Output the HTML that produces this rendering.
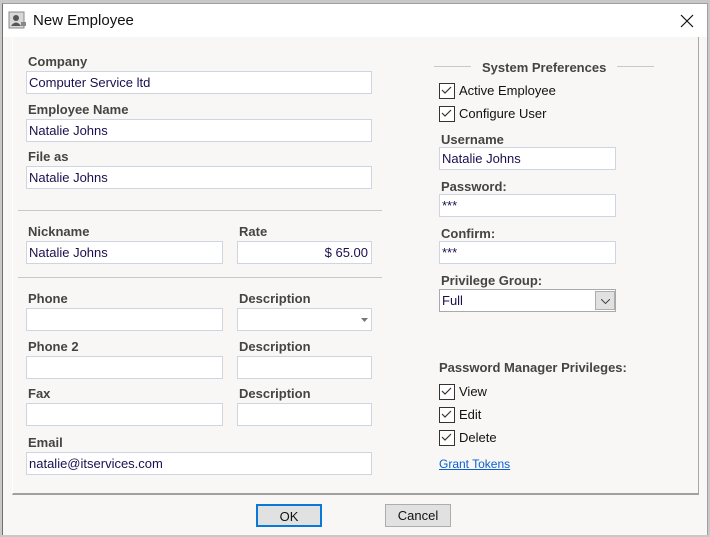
<!DOCTYPE html>
<html><head><meta charset="utf-8"><style>
*{box-sizing:border-box;margin:0;padding:0}
body{width:710px;height:537px;background:#c8c8c8;font-family:"Liberation Sans",Arial,sans-serif;position:relative;overflow:hidden}
.win{position:absolute;left:2px;top:3px;width:706px;height:532px;background:#f8f7f6;border-left:1px solid #707070;border-top:1px solid #a0a0a0;border-right:1px solid #a0a0a0}
.title{position:absolute;left:0;top:0;width:100%;height:33px;background:#fff}
.a{position:absolute}
.lbl{position:absolute;font-size:13px;font-weight:bold;color:#444}
.in{position:absolute;height:23px;background:#fff;border:1px solid #ccd5e0;font-size:13px;color:#1b0f4f;padding:3px 0 0 2px;white-space:nowrap}
.hr{position:absolute;height:1px;background:#c8c8c8}
.cb{position:absolute;font-size:13px;color:#111;padding-left:20px;height:16px;line-height:16px}
.cb:before{content:"";position:absolute;left:0;top:0;width:14px;height:14px;border:1px solid #333;background:#fff}
.cb svg{position:absolute;left:2px;top:3px}
.btn{position:absolute;height:23px;font-size:13px;text-align:center;line-height:21px;color:#111}
</style></head><body>
<div class="win">
<div class="title">
<svg class="a" style="left:5px;top:7px" width="20" height="20" viewBox="0 0 20 20"><rect x="1" y="1" width="15" height="16" fill="#d8d8d8" stroke="#888"/><circle cx="8" cy="7" r="3" fill="#555"/><path d="M3 15q5-7 10 0z" fill="#555"/><rect x="13" y="11" width="5" height="4" fill="#888"/></svg>
<div class="a" style="left:30px;top:8px;font-size:15px;color:#111">New Employee</div>
<svg class="a" style="left:677px;top:10px" width="14" height="14" viewBox="0 0 14 14"><path d="M1 1L13 13M13 1L1 13" stroke="#111" stroke-width="1.2"/></svg>
</div>
</div>
<div class="a" style="left:12px;top:37px;width:687px;height:458px;border-left:1px solid #fff;border-right:1px solid #a8a8a8;border-bottom:2px solid #a0a0a0"></div>

<div class="lbl" style="left:28px;top:54px">Company</div>
<div class="in" style="left:26px;top:71px;width:346px">Computer Service ltd</div>
<div class="lbl" style="left:28px;top:102px">Employee Name</div>
<div class="in" style="left:26px;top:119px;width:346px">Natalie Johns</div>
<div class="lbl" style="left:28px;top:149px">File as</div>
<div class="in" style="left:26px;top:166px;width:346px">Natalie Johns</div>
<div class="hr" style="left:18px;top:210px;width:364px"></div>
<div class="lbl" style="left:28px;top:224px">Nickname</div>
<div class="in" style="left:26px;top:241px;width:197px">Natalie Johns</div>
<div class="lbl" style="left:239px;top:224px">Rate</div>
<div class="in" style="left:237px;top:241px;width:135px;text-align:right;padding-right:3px">$ 65.00</div>
<div class="hr" style="left:18px;top:277px;width:364px"></div>
<div class="lbl" style="left:28px;top:291px">Phone</div>
<div class="in" style="left:26px;top:308px;width:197px"></div>
<div class="lbl" style="left:239px;top:291px">Description</div>
<div class="in" style="left:237px;top:308px;width:135px"><svg class="a" style="left:123px;top:9px" width="7" height="4"><path d="M0 0h7L3.5 4z" fill="#777"/></svg></div>
<div class="lbl" style="left:28px;top:339px">Phone 2</div>
<div class="in" style="left:26px;top:356px;width:197px"></div>
<div class="lbl" style="left:239px;top:339px">Description</div>
<div class="in" style="left:237px;top:356px;width:135px"></div>
<div class="lbl" style="left:28px;top:386px">Fax</div>
<div class="in" style="left:26px;top:403px;width:197px"></div>
<div class="lbl" style="left:239px;top:386px">Description</div>
<div class="in" style="left:237px;top:403px;width:135px"></div>
<div class="lbl" style="left:28px;top:435px">Email</div>
<div class="in" style="left:26px;top:452px;width:346px">natalie@itservices.com</div>

<div class="hr" style="left:434px;top:66px;width:37px"></div>
<div class="lbl" style="left:482px;top:60px">System Preferences</div>
<div class="hr" style="left:617px;top:66px;width:37px"></div>
<div class="cb" style="left:439px;top:83px">Active Employee<svg width="11" height="9"><path d="M1 4l3 3 6-6" stroke="#333" fill="none" stroke-width="1.2"/></svg></div>
<div class="cb" style="left:439px;top:106px">Configure User<svg width="11" height="9"><path d="M1 4l3 3 6-6" stroke="#333" fill="none" stroke-width="1.2"/></svg></div>
<div class="lbl" style="left:441px;top:132px">Username</div>
<div class="in" style="left:439px;top:147px;width:177px">Natalie Johns</div>
<div class="lbl" style="left:441px;top:179px">Password:</div>
<div class="in" style="left:439px;top:194px;width:177px">***</div>
<div class="lbl" style="left:441px;top:226px">Confirm:</div>
<div class="in" style="left:439px;top:241px;width:177px">***</div>
<div class="lbl" style="left:441px;top:273px">Privilege Group:</div>
<div class="in" style="left:439px;top:289px;width:177px;border-color:#aaa">Full<div class="a" style="left:155px;top:1px;width:20px;height:19px;background:#e1e1e1;border:1px solid #adadad"><svg class="a" style="left:5px;top:7px" width="9" height="5"><path d="M0 0l4.5 4.5L9 0" stroke="#444" fill="none"/></svg></div></div>
<div class="lbl" style="left:439px;top:360px">Password Manager Privileges:</div>
<div class="cb" style="left:439px;top:384px">View<svg width="11" height="9"><path d="M1 4l3 3 6-6" stroke="#333" fill="none" stroke-width="1.2"/></svg></div>
<div class="cb" style="left:439px;top:407px">Edit<svg width="11" height="9"><path d="M1 4l3 3 6-6" stroke="#333" fill="none" stroke-width="1.2"/></svg></div>
<div class="cb" style="left:439px;top:430px">Delete<svg width="11" height="9"><path d="M1 4l3 3 6-6" stroke="#333" fill="none" stroke-width="1.2"/></svg></div>
<div class="a" style="left:439px;top:457px;font-size:12px;color:#0b5fcf;text-decoration:underline">Grant Tokens</div>

<div class="btn" style="left:256px;top:504px;width:66px;background:#e1e1e1;border:2px solid #0a78d7">OK</div>
<div class="btn" style="left:385px;top:504px;width:66px;background:#e1e1e1;border:1px solid #adadad">Cancel</div>
</body></html>
